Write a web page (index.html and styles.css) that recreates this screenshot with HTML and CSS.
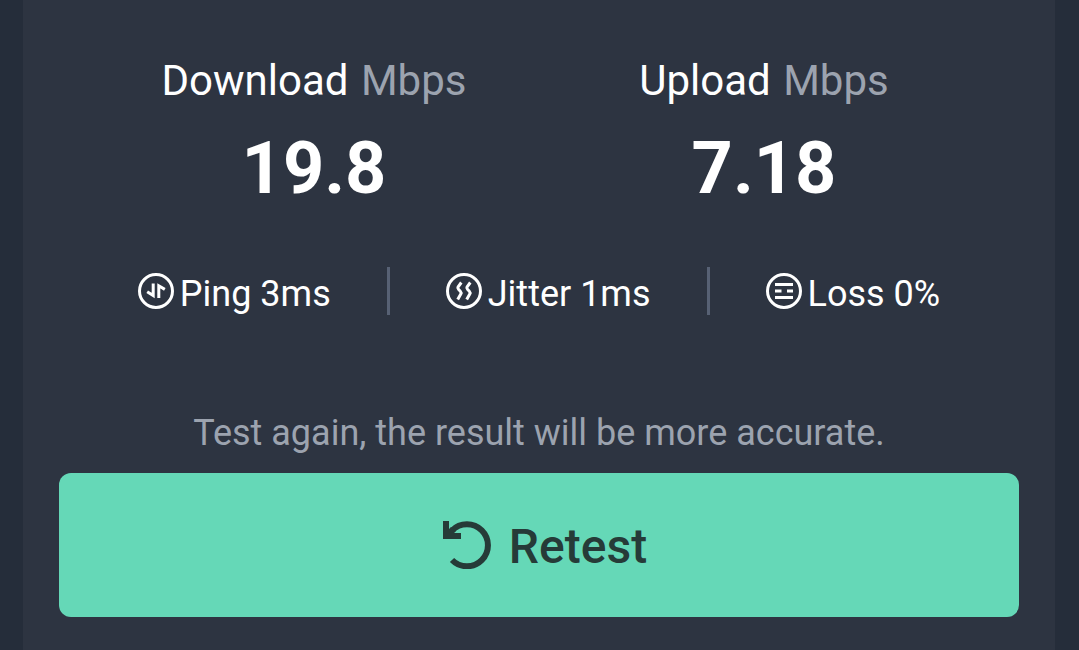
FILE: index.html
```html
<!DOCTYPE html>
<html lang="en">
<head>
    <meta charset="UTF-8">
    <meta name="viewport" content="width=device-width, initial-scale=1.0">
    <title>Speed Test</title>
    <link rel="stylesheet" href="styles.css">
</head>
<body>
    <main class="card">
        <div class="speeds">
            <div class="speed">
                <div class="speed-label">Download <span class="unit">Mbps</span></div>
                <div class="speed-value">19.8</div>
            </div>
            <div class="speed">
                <div class="speed-label">Upload <span class="unit">Mbps</span></div>
                <div class="speed-value">7.18</div>
            </div>
        </div>

        <div class="stats">
            <div class="stat">
                <svg class="stat-icon" viewBox="0 0 36 36" aria-hidden="true">
                    <circle cx="18" cy="18" r="16.5" stroke-width="3"/>
                    <path d="M9.2 18.8L15.2 22.6V10.5M20.8 25V12.8L26.8 16.4" stroke-width="3"/>
                </svg>
                <span>Ping 3ms</span>
            </div>
            <div class="stat">
                <svg class="stat-icon" viewBox="0 0 36 36" aria-hidden="true">
                    <circle cx="18" cy="18" r="16.5" stroke-width="3"/>
                    <path d="M15.3 9.5L12 14Q11.3 15.2 12.5 16.3L14.3 18.2Q15.6 19.6 14.8 21L11.7 26.5M24.3 9.5L21 14Q20.3 15.2 21.5 16.3L23.3 18.2Q24.6 19.6 23.8 21L20.7 26.5" stroke-width="3"/>
                </svg>
                <span>Jitter 1ms</span>
            </div>
            <div class="stat">
                <svg class="stat-icon" viewBox="0 0 36 36" aria-hidden="true">
                    <circle cx="18" cy="18" r="16.5" stroke-width="3"/>
                    <path d="M9 11.5H27M9 18H15.5M21 18H27M9 24.5H27" stroke-width="3"/>
                </svg>
                <span>Loss 0%</span>
            </div>
        </div>

        <p class="hint">Test again, the result will be more accurate.</p>
        <button type="button" class="retest">
            <svg class="retest-icon" viewBox="0 0 48 48" aria-hidden="true">
                <path d="M9 39A21 21 0 1 0 9 9.5" fill="none" stroke="currentColor" stroke-width="6"/>
                <path d="M0 0H6V8L8 6L13 10L11 12H18V18H0Z" fill="currentColor"/>
            </svg>
            <span>Retest</span>
        </button>
    </main>
</body>
</html>
```

FILE: styles.css
```css
* {
    box-sizing: border-box;
}

body {
    margin: 0;
    padding: 0 24px 0 23px;
    min-height: 100vh;
    display: flex;
    background-color: #252d3a;
    color: #fff;
    font-family: Roboto, sans-serif;
}

.card {
    flex: 1;
    padding: 53px 36px 32px;
    background-color: #2d3441;
}

.speeds {
    display: grid;
    grid-template-columns: 1fr 1fr;
    padding: 0 30px;
    text-align: center;
}

.speed-label {
    font-size: 42px;
    line-height: 56px;
}

.unit {
    margin-left: 2px;
    color: #9ca3af;
}

.speed-value {
    margin-top: 16px;
    font-size: 72px;
    font-weight: 700;
    line-height: 88px;
}

.stats {
    display: flex;
    justify-content: center;
    margin-top: 54px;
}

.stat {
    display: flex;
    align-items: center;
    gap: 6px;
    padding: 0 56px;
    font-size: 36px;
    line-height: 48px;
}

.stat + .stat {
    border-left: 3px solid #576174;
}

.stat span {
    padding-top: 6px;
    line-height: 42px;
}

.stat-icon {
    width: 36px;
    height: 36px;
    fill: none;
    stroke: #fff;
}

.hint {
    margin: 94px 0 16px;
    color: #9ca3af;
    font-size: 36px;
    line-height: 48px;
    text-align: center;
}

.retest {
    display: flex;
    justify-content: center;
    align-items: center;
    gap: 18px;
    width: 100%;
    height: 144px;
    padding: 0 0 0 12px;
    border: none;
    border-radius: 12px;
    background-color: #65d8b7;
    color: #263b38;
    font-family: inherit;
    font-size: 48px;
    font-weight: 500;
    cursor: pointer;
}

.retest span {
    padding-top: 2px;
}

.retest-icon {
    width: 48px;
    height: 48px;
}
```
